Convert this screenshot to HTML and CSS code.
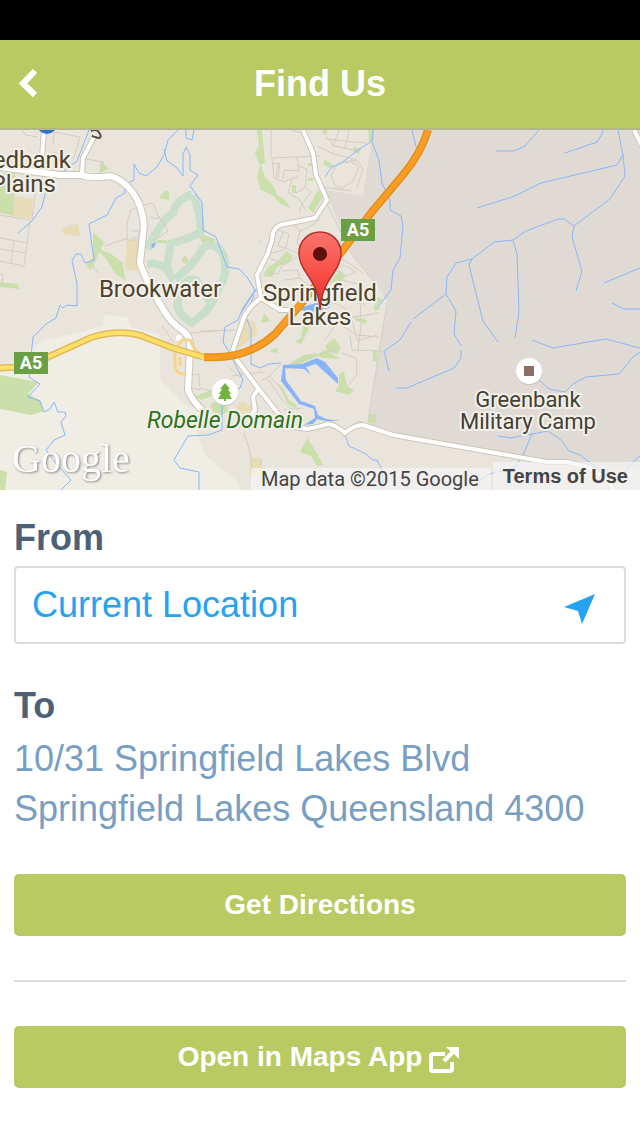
FILE: index.html
```html
<!DOCTYPE html>
<html lang="en">
<head>
    <meta charset="UTF-8">
    <meta name="viewport" content="width=device-width, initial-scale=1.0">
    <title>Find Us</title>
    <link rel="stylesheet" href="styles.css">
</head>
<body>
    <div class="status-bar"></div>
    <header class="header">
        <button class="back-button" type="button" aria-label="Back">
            <svg width="20" height="30" viewBox="0 0 20 30" fill="none" stroke="currentColor" stroke-width="6">
                <path d="M17 2L5 14.500L17 26"/>
            </svg>
        </button>
        <h1 class="header-title">Find Us</h1>
    </header>

    <section class="map" aria-label="Map">
        <svg class="map-canvas" viewBox="0 130 640 360" preserveAspectRatio="xMidYMid slice">
            <!-- land -->
            <rect class="land" y="130" width="640" height="360"/>
            <path class="land-light" d="M0 372L33 347 42 341 72 334 103 326 104 315 128 317 130 327 160 335 160 380 184 404 200 411 197 436 206 456 238 482 240 490H0z"/>
            <path class="land-military" d="M373 130H640V470L567 462 547 462 415 440 368 424 382 332 388 303 377 285 353 256 325 190 363 196z"/>
            <g class="park">
                <path d="M0 174L15 172 14 216 0 213z"/>
                <path d="M0 282L17 284 20 289 0 287zM0 375L39 382 28 394 40 400 44 411 31 415 0 409zM0 470L7 472 5 490H0z"/>
                <path d="M101 160L109 169 99 173zM165 191L169 191 169 200 159 198zM93 232L104 242 101 250 110 253 122 262 126 281 115 273 104 256 99 252 95 262 90 271 86 263 93 258z"/>
                <path d="M181 260L185 255 189 260 185 264zM197 233L215 239 215 246 203 244zM157 240H167V243H157zM195 396L212 391 225 387 225 393 195 400z"/>
                <path d="M257 130H262L265 162 261 165 265 178 272 184 277 195 285 200 291 209 280 203 273 196 261 190 257 178 260 165 255 153 259 145z"/>
                <path d="M318 190L323 196 313 213 308 208zM292 185H296V193H292zM308 178H313V181H308zM308 163H312V166H308zM325 160L334 165 330 168 323 164zM353 147L361 149 359 154 353 152zM368 130H374V140L369 142zM323 130H327V134H323z"/>
                <path d="M277 262L286 251 293 256 289 262 278 266 272 277 263 276 268 267zM330 282L340 270 346 276 337 285zM375 295L383 300 377 305 381 309 374 311z"/>
                <path d="M264 313L270 321 261 323zM303 326L312 318 308 331 301 344 295 342 301 338zM325 346L334 338 340 346 338 354 328 352zM313 313L322 308 320 316 314 320zM355 317L367 320 366 324 356 321zM373 351H377V361H373zM270 350L278 348 277 353 271 352zM368 414H376V423H368z"/>
                <path d="M283 368L303 355 317 353 316 357 300 364zM316 356L324 350 341 359 324 358zM339 374L344 372 347 386 354 390 349 395 335 391 339 386zM277 382L283 388 289 400 296 404 298 410 288 404zM307 438L317 453 323 465 317 466 311 456 300 452zM211 403L226 400 228 412 218 416 211 408zM200 394L212 390 212 396 200 400z"/>
            </g>
            <path class="sand" d="M15 196L33 199 31 219 14 216zM61 228L78 223 80 236 65 235zM127 240L139 240 137 271 125 269zM244 318L255 322 257 334 247 342 237 349 238 335zM235 406L243 401 253 407 246 415 236 411zM250 456L262 459 261 474 250 475z"/>
            <path class="golf" d="M192 194Q174 202 174 212Q159 223 148 249M193 195Q200 210 201 232Q184 241 171 243L168 260Q166 272 174 280M147 264Q159 262 168 270M175 279Q196 263 202 249Q213 239 223 254Q229 273 220 285Q214 302 205 312L192 323Q173 311 179 298Q183 276 196 280L210 302"/>

            <!-- local streets -->
            <g class="street">
                <path d="M22 130L25 135 38 137M53 145L54 132 80 137 74 158 53 152M86 159L103 162 102 172M0 215L30 220 24 266 0 261M32 219L36 185 43 176M0 238L28 243M0 249L27 253M14 241L11 262"/>
                <path d="M127 240V223L131 210 140 206 153 203 159 219 149 217M127 240H140M131 231H139V238H131M105 246L128 238M96 253L93 267 99 273M155 240L168 231 159 216"/>
                <path d="M271 130V158L321 156M323 132L334 146 358 151M325 139L366 143M339 130L333 146M349 130L345 148M317 146L334 154 357 160M272 158L274 178 284 182 298 176M278 164L276 177M273 164L280 163 278 178M297 157L299 171 284 170 283 179M290 130L303 133M292 180L288 193 299 199 306 211M299 166L307 169 305 188 296 193M305 187L311 192 302 204 299 213"/>
                <path d="M351 162L359 166 353 181 342 188 335 186 331 175 338 163zM345 162Q358 156 363 169L357 187M322 187L352 191M325 200L353 256 378 287"/>
                <path d="M278 230L289 234 286 248 278 246 283 232M294 226L300 230 297 244 306 250M299 232L313 225 321 218M265 255L280 251 286 248 299 254M283 262L278 274 268 273M270 258L284 265 297 256M282 271L298 270 299 277M335 270L344 265 356 272 347 276zM337 257L350 264 363 273M341 280L358 284 369 291M285 280L300 278 309 286M349 290L360 297 365 306"/>
                <path d="M320 320L341 325 356 335 379 337M333 302L346 309 351 318 358 341 377 335M325 313L347 318 379 313M335 325L325 340M360 297L361 325 358 351M327 304L326 325M350 336L352 350 382 351M341 353L356 358 357 374 348 386M284 370L302 360 326 352 341 348M232 376L264 372M281 364L270 376 262 380M268 379L280 397 292 411M283 410L303 408M282 389L271 378M200 331L235 330M236 357L243 370 240 377 227 365M191 375L199 374 200 390 191 388M190 333L215 331M173 342L162 326M244 433L250 452 252 470M343 432L359 421 367 424M261 459L261 479M200 388L211 391"/>
                <path d="M0 274L3 274 2 284M259 240L261 243M368 420L387 303"/>
            </g>

            <!-- creeks -->
            <g class="creek">
                <path d="M89 130L77 161 61 173 49 178 42 207 32 221 18 233M178 130L168 140 164 155 157 167 146 176 139 173 134 164V180L127 183 123 179 125 193 116 198 107 215 89 224 94 260 85 263 81 254 76 254 72 261 77 283 77 306 67 305 63 308 60 305 56 318 46 324 33 337 29 377 40 384 28 397 40 401 44 412 50 409 54 402 58 412 65 412 66 416 61 422 65 435 54 440 46 450 57 465 71 480 61 490"/>
                <path d="M164 149L167 161 176 167 183 176V154L186 147 190 155 190 170 198 175 190 186 202 202 203 230 216 237 227 267 239 269 247 277 255 290 243 308 238 320 225 327 223 342 228 350 243 380 240 388 227 393 222 402 222 411M254 295L246 317 251 330 251 364 260 368 269 364 281 363M222 411L222 430 208 435 188 436 174 460 180 468 199 472 199 490M186 130V138L192 140 194 130M257 288L241 313"/>
                <path d="M373 130L372 141 358 150 340 164 332 167 325 177M372 142L379 160 382 183 390 200 390 210 401 216 403 226 400 258 393 270 391 290 378 307M412 130L416 147"/>
                <path d="M539 130L525 146 514 151 496 151M603 130L602 134 597 142 565 153M618 130L623 155 617 165 541 183 515 196 477 208M623 155L625 176 610 199 574 226 564 219 558 219 526 231 513 240 494 242 472 259 456 263 447 277 446 294 456 311 454 334 461 346M461 350V358L454 368 407 388H396M446 294L413 319M411 322L400 340 384 351 389 371M472 259L469 265 483 321 498 342M513 240L517 254 519 312 515 338M574 226L572 237 582 271 576 291M640 268L604 283M612 303L624 309H640M532 340L553 348 606 339 640 348M640 352L633 357 619 374 586 377 573 384 565 392 549 389 539 380"/>
                <path d="M498 436L511 438 548 431 561 440 569 451 580 455 600 470M532 434L522 457 514 468 489 474 478 482 477 490M345 435L349 446 366 454 373 460 377 460 382 470 383 490M640 456L635 460 626 470"/>
            </g>
            <path class="water" d="M283 365L302 364 317 358 325 362 338 378V384L316 364 306 367 311 375 304 369 285 368 286 380 301 401 315 406 318 415 326 419 340 421 325 421 317 419 313 424 304 425 315 418 314 409 299 404 281 381zM303 307L322 301 333 302 329 308 311 312 300 310zM152 244L156 242 154 248 151 247z"/>

            <!-- roads -->
            <g class="road-case">
                <path class="wide" d="M0 167L30 171 60 175 82 175Q90 179 110 176Q123 179 133 193Q142 205 144 225L140 263Q145 279 163 309Q170 322 183 331Q191 337 190 348L188 390Q191 400 205 413"/>
                <path d="M303 130L313 153 316 175 327 200 315 218 280 225Q272 229 272 240L268 253 257 275 261 298 280 310H294M261 298Q248 307 243 320L233 350 237 360 258 388 288 426 307 429Q319 427 327 424Q335 424 345 433Q354 425 363 425L393 435 547 462 567 462 590 468 607 480 614 490M258 389L253 397 255 410 249 418M42 158L44 130M82 174L83 158 95 135M634 130L642 146"/>
            </g>
            <g class="road">
                <path class="wide" d="M0 167L30 171 60 175 82 175Q90 179 110 176Q123 179 133 193Q142 205 144 225L140 263Q145 279 163 309Q170 322 183 331Q191 337 190 348L188 390Q191 400 205 413"/>
                <path d="M303 130L313 153 316 175 327 200 315 218 280 225Q272 229 272 240L268 253 257 275 261 298 280 310H294M261 298Q248 307 243 320L233 350 237 360 258 388 288 426 307 429Q319 427 327 424Q335 424 345 433Q354 425 363 425L393 435 547 462 567 462 590 468 607 480 614 490M258 389L253 397 255 410 249 418M42 158L44 130M82 174L83 158 95 135M634 130L642 146"/>
            </g>
            <circle cx="179" cy="338" r="3" fill="#fff"/>
            <path class="rail" d="M91 131Q97 128 100 134Q102 138 98 138L92 136"/>
            <path class="ramp" d="M203 357L194 348 190 340 182 340 176 348M175 349V367Q177 375 185 374M180 357V367"/>
            <path class="highway-case" d="M0 368L17 367Q30 366 48 357L90 338Q108 332 127 333Q138 334 147 338L173 348 203 357"/>
            <path class="highway" d="M0 368L17 367Q30 366 48 357L90 338Q108 332 127 333Q138 334 147 338L173 348 203 357"/>
            <path class="motorway-case" d="M204 357Q247 360 275 334L301 304 343 250 371 213 402 176Q421 154 428 130"/>
            <path class="motorway" d="M204 357Q247 360 275 334L301 304 343 250 371 213 402 176Q421 154 428 130"/>

            <!-- shields and points of interest -->
            <circle cx="47" cy="124" r="10" fill="#2f74c9"/>
            <g class="shield">
                <rect x="14" y="352" width="34" height="22"/>
                <text x="31" y="369">A5</text>
                <rect x="341" y="219" width="34" height="22"/>
                <text x="358" y="236">A5</text>
            </g>
            <circle class="poi-shadow" cx="225" cy="393" r="13"/>
            <circle class="poi" cx="225" cy="392" r="13"/>
            <path fill="#6eb43f" d="M225 383L230 389H228L231 394H229L232 399H226V401H224V399H218L221 394H219L222 389H220z"/>
            <circle class="poi-shadow" cx="529" cy="372" r="13"/>
            <circle class="poi" cx="529" cy="371" r="13"/>
            <rect x="524" y="366" width="10" height="10" fill="#8d6e63"/>

            <g class="place">
                <text x="71" y="168" text-anchor="end">Redbank</text>
                <text x="56" y="192" text-anchor="end">Plains</text>
                <text x="160" y="297" text-anchor="middle">Brookwater</text>
                <text x="320" y="301" text-anchor="middle">Springfield</text>
                <text x="320" y="325" text-anchor="middle">Lakes</text>
            </g>
            <g class="place place-poi">
                <text x="528" y="407" text-anchor="middle">Greenbank</text>
                <text x="528" y="429" text-anchor="middle">Military Camp</text>
                <text class="place-park" x="225" y="428" text-anchor="middle">Robelle Domain</text>
            </g>

            <!-- marker -->
            <defs>
                <linearGradient id="pin" x1="0" y1="0" x2="0" y2="1">
                    <stop offset="0" stop-color="#fb756d"/>
                    <stop offset="0.600" stop-color="#f74a42"/>
                    <stop offset="1" stop-color="#d82f29"/>
                </linearGradient>
            </defs>
            <path fill="url(#pin)" stroke="#b5302b" stroke-width="1.500" d="M320 310C319 292 313 283 307 274C302 267 299 261 299 253A21 21 0 0 1 341 253C341 261 338 267 333 274C327 283 321 292 320 310z"/>
            <circle cx="320" cy="254" r="7" fill="#5f110e"/>

            <text class="logo" x="12" y="472">Google</text>
        </svg>
        <div class="map-credits">
            <span class="map-data">Map data ©2015 Google</span>
            <a class="map-terms" href="#terms">Terms of Use</a>
        </div>
    </section>

    <main class="content">
        <label class="heading" for="from">From</label>
        <div class="from-box">
            <input class="from-input" id="from" type="text" value="Current Location">
            <button class="locate-button" type="button" aria-label="Use current location">
                <svg width="32" height="32" viewBox="0 0 32 32" fill="currentColor">
                    <path d="M31 1L18 31 14 18 0 14z"/>
                </svg>
            </button>
        </div>

        <h2 class="heading">To</h2>
        <address class="address">10/31 Springfield Lakes Blvd<br>Springfield Lakes Queensland 4300</address>

        <button class="button" type="button">Get Directions</button>
        <hr class="divider">
        <button class="button" type="button">
            Open in Maps App
            <svg width="34" height="28" viewBox="0 0 34 28" fill="none" stroke="currentColor" stroke-width="4">
                <path d="M17 8H5Q3 8 3 10V23Q3 25 5 25H22Q24 25 24 23V16" stroke-linejoin="round"/>
                <path d="M16 15L27 4"/>
                <path d="M18 1H31V13L27 9 22 5z" fill="currentColor" stroke="none"/>
            </svg>
        </button>
    </main>
</body>
</html>
```

FILE: styles.css
```css
:root {
    --green: #b9ca62;
    --blue: #25a2f1;
    --heading-color: #4c6178;
    --address-color: #789fc3;
    --line-color: #dcdcdc;
}

* {
    box-sizing: border-box;
}

body {
    margin: 0;
    background: #fff;
    font-family: "Liberation Sans", Arial, sans-serif;
}

button {
    padding: 0;
    border: 0;
    background: none;
    font-family: inherit;
    cursor: pointer;
}

.status-bar {
    height: 40px;
    background: #000;
}

.header {
    display: grid;
    grid-template-columns: 56px 1fr 56px;
    align-items: center;
    height: 90px;
    border-bottom: 2px solid #b3b689;
    background: var(--green);
    color: #fff;
}

.back-button {
    display: flex;
    justify-content: center;
    color: #fff;
}

.header-title {
    margin: 0;
    font-size: 36px;
    line-height: 40px;
    text-align: center;
}

/* Map */
.map {
    position: relative;
    height: 360px;
    overflow: hidden;
}

.map-canvas {
    display: block;
    width: 100%;
    height: 100%;
    font-family: Roboto, sans-serif;
}

.land {
    fill: #e9e5dc;
}

.land-light {
    fill: #f0ede5;
}

.land-military {
    fill: #dfdbd4;
}

.park {
    fill: #cadfaa;
}

.sand {
    fill: #e8dcb8;
}

.golf {
    fill: none;
    stroke: #cadfcb;
    stroke-width: 8;
    stroke-linejoin: round;
}

.street {
    fill: none;
    stroke: #d3cec5;
    stroke-width: 1;
}

.creek {
    fill: none;
    stroke: #8ab6fb;
    stroke-width: 1;
}

.water {
    fill: #8ab4f8;
}

.road-case,
.road {
    fill: none;
    stroke-linejoin: round;
}

.road-case {
    stroke: #cbc5b9;
    stroke-width: 6;
}

.road-case .wide {
    stroke-width: 8;
}

.road {
    stroke: #fff;
    stroke-width: 4;
}

.road .wide {
    stroke-width: 6;
}

.rail {
    fill: none;
    stroke: #565142;
    stroke-width: 2;
}

.ramp {
    fill: none;
    stroke: #f6d58b;
    stroke-width: 3;
}

.highway-case,
.highway,
.motorway-case,
.motorway {
    fill: none;
}

.highway-case {
    stroke: #e0b95c;
    stroke-width: 7;
}

.highway {
    stroke: #ffe168;
    stroke-width: 4;
}

.motorway-case {
    stroke: #e1901c;
    stroke-width: 8;
}

.motorway {
    stroke: #fb9c24;
    stroke-width: 5;
}

.shield rect {
    fill: #6b9f43;
}

.shield text {
    fill: #fff;
    font-size: 18px;
    font-weight: 700;
    text-anchor: middle;
}

.poi {
    fill: #fff;
}

.poi-shadow {
    fill: #c4c0b8;
}

.place {
    fill: #4b432f;
    stroke: #f3f0e9;
    stroke-width: 4;
    stroke-linejoin: round;
    paint-order: stroke;
    font-size: 24px;
}

.place-poi {
    fill: #423f35;
    font-size: 22px;
}

.place-park {
    fill: #2f7220;
    font-size: 23px;
    font-style: italic;
}

.logo {
    fill: #fff;
    font-family: "Liberation Serif", serif;
    font-size: 40px;
    filter: drop-shadow(1px 1px 1px #858585);
}

.map-credits {
    position: absolute;
    right: 0;
    bottom: 0;
    display: flex;
    align-items: flex-end;
    gap: 2px;
    color: #444;
    font-size: 20px;
}

.map-data,
.map-terms {
    padding: 0 12px 0 10px;
    background: rgba(245, 245, 245, 0.7);
}

.map-data {
    font-family: Roboto, sans-serif;
    line-height: 22px;
}

.map-terms {
    color: inherit;
    font-weight: 700;
    line-height: 28px;
    text-decoration: none;
}

/* Directions form */
.content {
    padding: 28px 14px 48px;
}

.heading {
    display: block;
    margin: 0;
    color: var(--heading-color);
    font-size: 36px;
    font-weight: 700;
    line-height: 40px;
}

.from-box {
    display: flex;
    align-items: center;
    height: 78px;
    margin: 8px 0 42px;
    padding: 0 28px 0 16px;
    border: 2px solid var(--line-color);
    border-radius: 4px;
}

.from-input {
    flex: 1;
    min-width: 0;
    height: 48px;
    padding: 0;
    border: 0;
    outline: 0;
    background: none;
    color: var(--blue);
    font-family: inherit;
    font-size: 36px;
}

.locate-button {
    display: flex;
    padding-top: 8px;
    color: var(--blue);
}

.address {
    margin: 8px 0 40px;
    color: var(--address-color);
    font-size: 36px;
    font-style: normal;
    line-height: 50px;
}

.button {
    display: flex;
    align-items: center;
    justify-content: center;
    gap: 6px;
    width: 100%;
    height: 62px;
    border-radius: 5px;
    background: var(--green);
    color: #fff;
    font-size: 28px;
    font-weight: 700;
}

.button svg {
    margin-top: 6px;
}

.divider {
    height: 2px;
    margin: 44px 0;
    border: 0;
    background: var(--line-color);
}
```
